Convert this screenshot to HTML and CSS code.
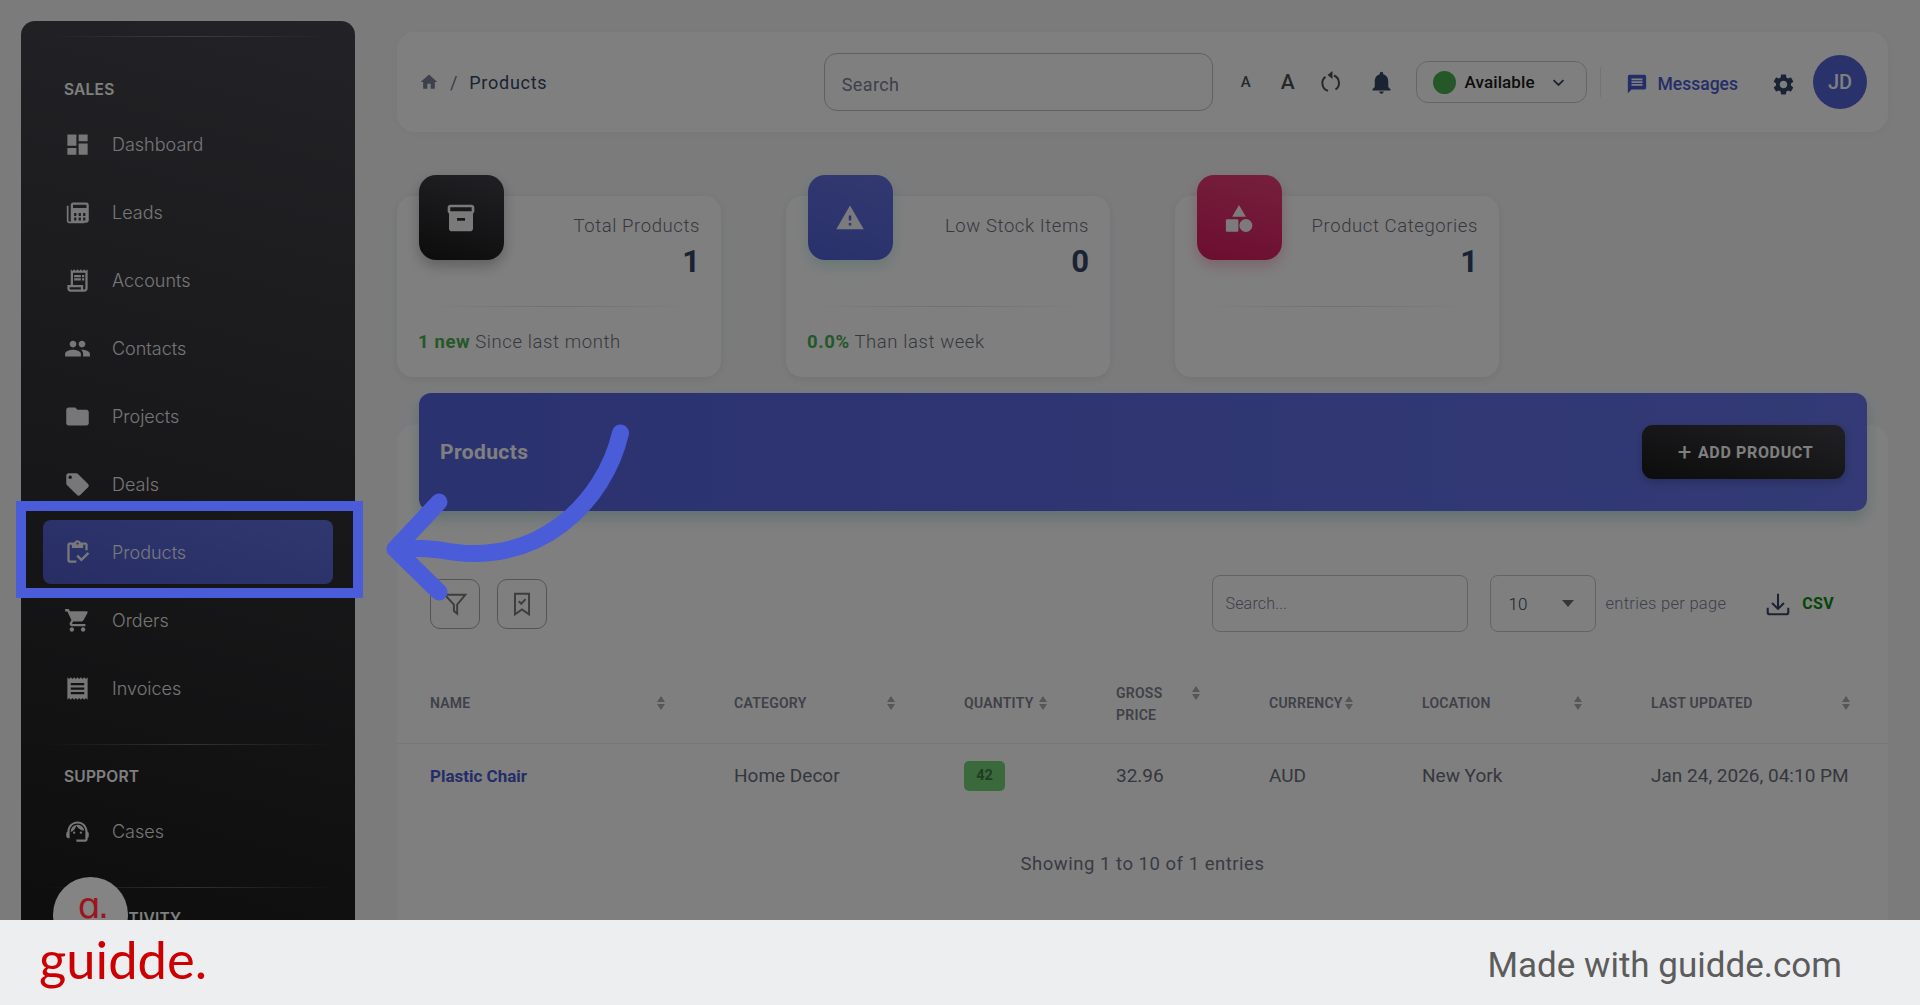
FILE: index.html
```html
<!DOCTYPE html>
<html lang="en">
<head>
<meta charset="utf-8">
<title>Products</title>
<link rel="stylesheet" href="styles.css">
</head>
<body>
<div class="stage">
  <div class="app">
    <aside class="sidebar">
      <div class="rule"></div>
      <div class="section first">SALES</div>
      <nav class="nav">
        <a class="item"><svg class="ni" viewBox="0 0 24 24"><path d="M3 13h8V3H3v10zm0 8h8v-6H3v6zm10 0h8V11h-8v10zm0-18v6h8V3h-8z"/></svg><span>Dashboard</span></a>
        <a class="item"><svg class="ni" viewBox="0 0 24 24"><path d="M4 6H2.500v13.500c0 1.100.9 2 2 2H18V20H4V6z"/><path d="M20 3H8c-1.100 0-2 .9-2 2v14c0 1.100.9 2 2 2h12c1.100 0 2-.9 2-2V5c0-1.100-.9-2-2-2zM8 5h12v3H8V5zm3 14H9v-2.500h2V19zm0-4H9v-2.500h2V15zm4 4h-2v-2.500h2V19zm0-4h-2v-2.500h2V15zm4 4h-2v-2.500h2V19zm0-4h-2v-2.500h2V15z"/></svg><span>Leads</span></a>
        <a class="item"><svg class="ni" viewBox="0 0 24 24"><path d="M19.500 3.500L18 2l-1.500 1.500L15 2l-1.500 1.500L12 2l-1.500 1.500L9 2 7.500 3.500 6 2v14H3v3c0 1.660 1.340 3 3 3h12c1.660 0 3-1.340 3-3V2l-1.500 1.500zM15 20H6c-.55 0-1-.45-1-1v-1h10v2zm4-1c0 .55-.45 1-1 1s-1-.45-1-1v-3H8V5h11v14z"/><path d="M9 7h6v2H9zm7 0h2v2h-2zM9 10h6v2H9zm7 0h2v2h-2z"/></svg><span>Accounts</span></a>
        <a class="item"><svg class="ni" viewBox="0 0 24 24"><path d="M16 11c1.660 0 2.990-1.340 2.990-3S17.660 5 16 5c-1.660 0-3 1.340-3 3s1.340 3 3 3zm-8 0c1.660 0 2.990-1.340 2.990-3S9.660 5 8 5C6.340 5 5 6.340 5 8s1.340 3 3 3zm0 2c-2.330 0-7 1.170-7 3.500V19h14v-2.500c0-2.330-4.670-3.500-7-3.500zm8 0c-.29 0-.62.02-.97.05 1.160.84 1.970 1.970 1.970 3.450V19h6v-2.500c0-2.330-4.670-3.500-7-3.500z"/></svg><span>Contacts</span></a>
        <a class="item"><svg class="ni" viewBox="0 0 24 24"><path d="M10 4H4c-1.100 0-1.990.9-1.990 2L2 18c0 1.100.9 2 2 2h16c1.100 0 2-.9 2-2V8c0-1.100-.9-2-2-2h-8l-2-2z"/></svg><span>Projects</span></a>
        <a class="item"><svg class="ni" viewBox="0 0 24 24"><path d="M21.410 11.580l-9-9C12.050 2.220 11.550 2 11 2H4c-1.100 0-2 .9-2 2v7c0 .55.22 1.050.59 1.420l9 9c.36.36.86.58 1.410.58.55 0 1.050-.22 1.410-.59l7-7c.37-.36.59-.86.59-1.410 0-.55-.23-1.060-.59-1.420zM5.500 7C4.670 7 4 6.330 4 5.500S4.670 4 5.500 4 7 4.670 7 5.500 6.330 7 5.500 7z"/></svg><span>Deals</span></a>
        <a class="item active"><svg class="ni" viewBox="0 0 24 24"><path d="M5 5h2v3h10V5h2v5h2V5c0-1.100-.9-2-2-2h-4.180C14.400 1.840 13.300 1 12 1s-2.400.84-2.820 2H5c-1.100 0-2 .9-2 2v14c0 1.100.9 2 2 2h6v-2H5V5zm7-2c.55 0 1 .45 1 1s-.45 1-1 1-1-.45-1-1 .45-1 1-1z"/><path d="M21 11.500L15.510 17l-3.010-3-1.500 1.500 4.510 4.500 6.990-7z"/></svg><span>Products</span></a>
        <a class="item"><svg class="ni" viewBox="0 0 24 24"><path d="M7 18c-1.100 0-1.990.9-1.990 2S5.900 22 7 22s2-.9 2-2-.9-2-2-2zM1 2v2h2l3.600 7.590-1.350 2.450c-.16.28-.25.61-.25.96 0 1.100.9 2 2 2h12v-2H7.420c-.14 0-.25-.11-.25-.25l.03-.12.9-1.830h7.450c.75 0 1.410-.41 1.750-1.030l3.580-6.490c.08-.14.12-.31.12-.48 0-.55-.45-1-1-1H5.210l-.94-2H1zm16 16c-1.100 0-1.990.9-1.990 2s.89 2 1.990 2 2-.9 2-2-.9-2-2-2z"/></svg><span>Orders</span></a>
        <a class="item"><svg class="ni" viewBox="0 0 24 24"><path d="M18 17H6v-2h12v2zm0-4H6v-2h12v2zm0-4H6V7h12v2zM3 22l1.500-1.500L6 22l1.500-1.500L9 22l1.500-1.500L12 22l1.500-1.500L15 22l1.500-1.500L18 22l1.500-1.500L21 22V2l-1.500 1.500L18 2l-1.500 1.500L15 2l-1.500 1.500L12 2l-1.500 1.500L9 2 7.500 3.500 6 2 4.500 3.500 3 2v20z"/></svg><span>Invoices</span></a>
      </nav>
      <div class="rule mid"></div>
      <div class="section second">SUPPORT</div>
      <nav class="nav">
        <a class="item"><svg class="ni" viewBox="0 0 24 24"><path d="M21 12.220C21 6.730 16.740 3 12 3c-4.690 0-9 3.650-9 9.280-.6.34-1 .98-1 1.720v2c0 1.100.9 2 2 2h1v-6.100c0-3.870 3.130-7 7-7s7 3.130 7 7V19h-8v2h8c1.100 0 2-.9 2-2v-1.220c.59-.31 1-.92 1-1.610v-2.300c0-.7-.41-1.310-1-1.650z"/><circle cx="9" cy="13" r="1"/><circle cx="15" cy="13" r="1"/><path d="M18 11.030C17.520 8.180 15.040 6 12.050 6c-3.030 0-6.290 2.510-6.030 6.450 2.470-1.010 4.330-3.210 4.860-5.890 1.310 2.630 4 4.440 7.120 4.470z"/></svg><span>Cases</span></a>
      </nav>
      <div class="rule low"></div>
      <div class="section third">ACTIVITY</div>
    </aside>

    <main class="main">
      <header class="topbar">
        <div class="crumbs">
          <svg class="home" viewBox="0 0 24 24"><path d="M10 20v-6h4v6h5v-8h3L12 3 2 12h3v8z"/></svg>
          <span class="slash">/</span>
          <span class="crumb">Products</span>
        </div>
        <div class="topsearch">Search</div>
        <div class="tools">
          <span class="a-small">A</span>
          <span class="a-large">A</span>
          <svg class="refresh" viewBox="0 0 24 24"><path d="M15 5.500a8 8 0 0 1 1.500 14"/><path d="M9 20.800a8 8 0 0 1 -2.500 -14"/><path class="fillp" d="M13.500 1v8l-5-4z"/></svg>
          <svg class="bell" viewBox="0 0 24 24"><path d="M12 22c1.100 0 2-.9 2-2h-4c0 1.100.89 2 2 2zm6-6v-5c0-3.070-1.640-5.640-4.500-6.320V4c0-.83-.67-1.500-1.500-1.500s-1.500.67-1.500 1.500v.68C7.630 5.360 6 7.920 6 11v5l-2 2v1h16v-1l-2-2z"/></svg>
          <div class="status"><i class="dot"></i><b>Available</b><svg class="chev" viewBox="0 0 24 24"><path d="M5 8.500l7 7 7-7"/></svg></div>
          <i class="vline"></i>
          <a class="msg"><svg viewBox="0 0 24 24"><path d="M20 2H4c-1.100 0-1.990.9-1.990 2L2 22l4-4h14c1.100 0 2-.9 2-2V4c0-1.100-.9-2-2-2zm-2 12H6v-2h12v2zm0-3H6V9h12v2zm0-3H6V6h12v2z"/></svg><span>Messages</span></a>
          <svg class="gear" viewBox="0 0 24 24"><path d="M19.140 12.940c.04-.3.06-.61.06-.94 0-.32-.02-.64-.07-.94l2.030-1.580c.18-.14.23-.41.12-.61l-1.920-3.320c-.12-.22-.37-.29-.59-.22l-2.390.96c-.5-.38-1.030-.7-1.620-.94l-.36-2.540c-.04-.24-.24-.41-.48-.41h-3.840c-.24 0-.43.17-.47.41l-.36 2.540c-.59.24-1.130.57-1.620.94l-2.390-.96c-.22-.08-.47 0-.59.22L2.740 8.870c-.12.21-.08.47.12.61l2.030 1.580c-.05.3-.09.63-.09.94s.02.64.07.94l-2.030 1.580c-.18.14-.23.41-.12.61l1.920 3.320c.12.22.37.29.59.22l2.390-.96c.5.38 1.030.7 1.620.94l.36 2.540c.05.24.24.41.48.41h3.840c.24 0 .44-.17.47-.41l.36-2.540c.59-.24 1.130-.56 1.620-.94l2.390.96c.22.08.47 0 .59-.22l1.920-3.320c.12-.22.07-.47-.12-.61l-2.010-1.580zM12 15.600c-1.980 0-3.600-1.620-3.600-3.600s1.620-3.600 3.600-3.600 3.600 1.620 3.600 3.600-1.620 3.600-3.600 3.600z"/></svg>
          <div class="avatar">JD</div>
        </div>
      </header>

      <section class="stats">
        <article class="stat">
          <div class="stat-top">
            <div class="tile t-dark"><svg class="big" viewBox="0 0 24 24"><path d="M20 2H4c-1 0-2 .9-2 2v3.010c0 .72.43 1.340 1 1.690V20c0 1.100 1.100 2 2 2h14c.9 0 2-1.100 2-2V8.700c.57-.35 1-.97 1-1.690V4c0-1.100-1-2-2-2zm-5 12H9v-2h6v2zm5-7H4V4h16v3z"/></svg></div>
            <div class="stat-text"><p>Total Products</p><h4>1</h4></div>
          </div>
          <div class="fade"></div>
          <div class="stat-foot"><b>1 new</b> Since last month</div>
        </article>
        <article class="stat">
          <div class="stat-top">
            <div class="tile t-blue"><svg viewBox="0 0 24 24"><path d="M1 21h22L12 2 1 21zm12-3h-2v-2h2v2zm0-4h-2v-4h2v4z"/></svg></div>
            <div class="stat-text"><p>Low Stock Items</p><h4>0</h4></div>
          </div>
          <div class="fade"></div>
          <div class="stat-foot"><b>0.0%</b> Than last week</div>
        </article>
        <article class="stat">
          <div class="stat-top">
            <div class="tile t-pink"><svg viewBox="0 0 24 24"><path d="M12 1.500l5.500 9.500h-11z"/><rect x="1.500" y="13" width="10" height="10" rx="1"/><circle cx="17.500" cy="18" r="5.200"/></svg></div>
            <div class="stat-text"><p>Product Categories</p><h4>1</h4></div>
          </div>
          <div class="fade"></div>
          <div class="stat-foot"></div>
        </article>
      </section>

      <section class="panel">
        <div class="panel-head">
          <h2>Products</h2>
          <button class="add"><span class="plus">+</span>ADD PRODUCT</button>
        </div>
        <div class="toolbar">
          <div class="left-tools">
            <span class="iconbtn"><svg viewBox="0 0 24 24"><path d="M2.500 3.500h19l-7.500 9v8.500l-3-2.500v-6z"/></svg></span>
            <span class="iconbtn"><svg viewBox="0 0 24 24"><path d="M5.500 2.500h13v19l-6.500-4.500-6.500 4.500z"/><path d="M9 9.500l2.300 2.300 4-4.300"/></svg></span>
          </div>
          <div class="right-tools">
            <div class="tsearch">Search...</div>
            <div class="entries"><span>10</span><i class="tri"></i></div>
            <span class="perpage">entries per page</span>
            <a class="csv"><svg viewBox="0 0 24 24"><path d="M12 2.500v14M6.500 11l5.500 5.500 5.500-5.500M2.500 15.500v4a2 2 0 0 0 2 2h15a2 2 0 0 0 2-2v-4"/></svg><b>CSV</b></a>
          </div>
        </div>
        <div class="table">
          <div class="th first"><span>NAME</span><i class="sort"></i></div>
          <div class="th"><span>CATEGORY</span><i class="sort"></i></div>
          <div class="th"><span>QUANTITY</span><i class="sort"></i></div>
          <div class="th top"><span>GROSS PRICE</span><i class="sort"></i></div>
          <div class="th"><span>CURRENCY</span><i class="sort"></i></div>
          <div class="th"><span>LOCATION</span><i class="sort"></i></div>
          <div class="th last"><span>LAST UPDATED</span><i class="sort"></i></div>
          <div class="td first"><a class="name">Plastic Chair</a></div>
          <div class="td">Home Decor</div>
          <div class="td"><span class="badge">42</span></div>
          <div class="td">32.96</div>
          <div class="td">AUD</div>
          <div class="td">New York</div>
          <div class="td">Jan 24, 2026, 04:10 PM</div>
        </div>
        <p class="showing">Showing 1 to 10 of 1 entries</p>
      </section>
    </main>
  </div>

  <div class="dim"></div>
  <div class="bubble"><span>ɑ.</span></div>
  <div class="highlight"></div>
  <svg class="arrow" viewBox="0 0 1920 920"><path d="M620.500 433C605 500 540 570 440 550C425 548 410 548 395 549M439 502L395 549L439 592"/></svg>
</div>
<footer class="brand">
  <span class="logo">guidde.</span>
  <span class="made">Made with guidde.com</span>
</footer>
</body>
</html>
```
FILE: styles.css
```css
* { box-sizing: border-box; }
html, body { margin: 0; height: 1005px; overflow: hidden; }
body { font-family: Roboto, sans-serif; color: #344767; background: #edeef0; display: flex; flex-direction: column; }
p, h2, h4 { margin: 0; }

.stage { position: relative; height: 920px; overflow: hidden; flex: none; }
.app { display: flex; align-items: flex-start; height: 920px; background: #f6f7f9; }
.dim { position: absolute; inset: 0; background: rgba(0,0,0,.5); }

/* sidebar */
.sidebar { flex: none; width: 334px; height: 963px; margin: 21px 0 0 21px; padding-top: 15px; border-radius: 14px; background: linear-gradient(195deg, #46464e, #191919); font-family: Inter, sans-serif; color: #fff; }
.rule { height: 1px; margin: 0 22px; background: linear-gradient(90deg, rgba(255,255,255,0), rgba(255,255,255,.3), rgba(255,255,255,0)); }
.rule.mid { margin-top: 24px; }
.rule.low { margin-top: 24px; }
.section { height: 20px; margin-left: 43px; font-size: 15.500px; line-height: 20px; font-weight: 600; letter-spacing: .2px; }
.section.first { margin-top: 43px; margin-bottom: 12px; }
.section.second { margin-top: 22px; margin-bottom: 12px; }
.section.third { margin-top: 21px; margin-left: 85px; }
.nav { display: flex; flex-direction: column; gap: 4px; margin: 0 22px; }
.item { display: flex; align-items: center; height: 64px; padding-left: 21px; border-radius: 8px; font-size: 18px; font-weight: 300; color: rgba(255,255,255,.92); }
.item.active { background: linear-gradient(195deg, #6170e0, #4f5cc8); }
.ni { width: 27px; height: 27px; margin-right: 21px; fill: #fff; flex: none; opacity: .92; }

/* main */
.main { flex: none; width: 1491px; margin: 32px 0 0 42px; }
.topbar { display: flex; align-items: center; height: 100px; padding: 0 21px 0 22px; border-radius: 18px; background: rgba(255,255,255,.95); box-shadow: 0 2px 12px rgba(0,0,0,.04); }
.crumbs { display: flex; align-items: center; width: 405px; font-size: 18px; letter-spacing: .75px; }
.home { width: 20px; height: 20px; fill: #7b809a; margin-right: 11px; }
.slash { color: #6c7a93; margin-right: 11px; }
.topsearch { display: flex; align-items: center; width: 389px; height: 58px; padding: 4px 0 0 17px; border: 1.500px solid #bcc0c5; border-radius: 13px; color: #7b809a; font-size: 18px; letter-spacing: .35px; }
.tools { display: flex; align-items: center; flex: 1; height: 54px; }
.a-small { margin-left: 28px; font-size: 15px; font-weight: 500; color: #495057; }
.a-large { margin-left: 30px; font-size: 21px; font-weight: 500; color: #495057; }
.refresh { width: 24px; height: 24px; margin-left: 24px; fill: none; stroke: #495057; stroke-width: 2; }
.fillp { fill: #495057; stroke: none; }
.bell { width: 27px; height: 27px; margin-left: 25px; fill: #344767; }
.status { display: flex; align-items: center; width: 171px; height: 42px; margin-left: 21px; padding-left: 16px; border: 1.500px solid #c9ccd0; border-radius: 12px; }
.dot { width: 23px; height: 23px; border-radius: 50%; background: #4caf50; }
.status b { margin-left: 9px; font-size: 17px; font-weight: 500; color: #1a1a1a; letter-spacing: .1px; }
.chev { width: 17px; height: 17px; margin-left: 15px; fill: none; stroke: #344767; stroke-width: 2.500; }
.vline { width: 1px; height: 30px; margin-left: 13px; background: #e4e6ea; }
.msg { display: flex; align-items: center; margin-left: 25px; color: #4a5bd0; font-size: 17.500px; font-weight: 500; padding-top: 4px; }
.msg svg { width: 22px; height: 22px; fill: #4a5bd0; margin-right: 10px; }
.gear { width: 25px; height: 25px; margin: 4px 0 0 33px; fill: #344767; }
.avatar { display: flex; align-items: center; justify-content: center; width: 54px; height: 54px; margin-left: 17px; border-radius: 50%; background: #5465d6; color: #fff; font-size: 20px; font-weight: 500; }

/* stats */
.stats { display: flex; gap: 65px; margin-top: 64px; }
.stat { width: 324px; height: 181px; border-radius: 16px; background: #fff; box-shadow: 0 2px 10px rgba(0,0,0,.08); padding: 0 21px; }
.stat-top { display: flex; justify-content: space-between; height: 110px; }
.tile { display: flex; align-items: center; justify-content: center; width: 85px; height: 85px; margin-top: -21px; margin-left: .5px; border-radius: 17px; }
.tile svg { width: 30px; height: 30px; fill: #fff; opacity: .95; }
.tile svg.big { width: 32px; height: 32px; }
.t-dark { background: linear-gradient(195deg, #42424a, #191919); box-shadow: 0 6px 14px rgba(0,0,0,.25); }
.t-blue { background: linear-gradient(195deg, #6573e2, #5262d8); box-shadow: 0 6px 14px rgba(70,180,180,.25); }
.t-pink { background: linear-gradient(195deg, #ec407a, #d81b60); box-shadow: 0 6px 14px rgba(216,27,96,.25); }
.stat-text { text-align: right; padding-top: 18px; }
.stat-text p { font-size: 18.500px; line-height: 24px; font-weight: 300; color: #6d7080; letter-spacing: .6px; }
.stat-text h4 { margin-top: 6px; font-size: 31px; line-height: 36px; font-weight: 700; color: #344767; }
.fade { height: 1px; background: linear-gradient(90deg, rgba(0,0,0,0), rgba(0,0,0,.12), rgba(0,0,0,0)); }
.stat-foot { margin-top: 23px; font-size: 18.500px; line-height: 24px; font-weight: 300; color: #6d7080; letter-spacing: .6px; }
.stat-foot b { color: #4caf50; font-weight: 700; }

/* panel */
.panel { margin-top: 48px; height: 600px; border-radius: 18px 18px 0 0; background: #fff; }
.panel-head { position: relative; top: -32px; display: flex; align-items: center; justify-content: space-between; height: 118px; margin: 0 21px 0 22px; padding: 0 22px 0 21px; border-radius: 12px; background: linear-gradient(90deg, #5664e0, #6675ea); box-shadow: 0 8px 14px rgba(70,160,160,.3); }
.panel-head h2 { font-size: 21px; font-weight: 700; color: #fff; letter-spacing: .4px; }
.add { display: flex; align-items: center; justify-content: center; width: 203px; height: 54px; padding: 0 0 0 4px; border: 0; border-radius: 11px; background: linear-gradient(195deg, #42424a, #191919); color: #fff; font-family: Roboto, sans-serif; font-size: 16px; font-weight: 700; letter-spacing: .65px; box-shadow: 0 3px 8px rgba(0,0,0,.2); }
.plus { font-size: 24px; font-weight: 400; margin-right: 6px; line-height: 20px; }
.toolbar { display: flex; align-items: center; justify-content: space-between; height: 57px; margin-top: 32px; padding: 0 54px 0 33px; }
.left-tools { display: flex; gap: 17px; }
.iconbtn { display: flex; align-items: center; justify-content: center; width: 50px; height: 50px; border: 1.500px solid #a9a9ad; border-radius: 10px; }
.iconbtn svg { width: 26px; height: 26px; fill: none; stroke: #7a7a7e; stroke-width: 1.800; }
.right-tools { display: flex; align-items: center; }
.tsearch { display: flex; align-items: center; width: 256px; height: 57px; padding-left: 12px; border: 1.500px solid #c4c7cb; border-radius: 8px; font-size: 16px; font-weight: 300; color: #7b809a; letter-spacing: .2px; }
.entries { display: flex; align-items: center; justify-content: space-between; width: 106px; height: 57px; margin-left: 22px; padding: 0 21px 0 17px; border: 1.500px solid #c4c7cb; border-radius: 8px; font-size: 17px; font-weight: 300; color: #344767; }
.tri { width: 0; height: 0; border: 6.500px solid transparent; border-top: 7.500px solid #6f6f73; border-bottom: 0; }
.perpage { margin-left: 9px; font-size: 16.500px; font-weight: 300; color: #7b809a; letter-spacing: .3px; }
.csv { display: flex; align-items: center; margin-left: 39px; }
.csv svg { width: 26px; height: 26px; fill: none; stroke: #344767; stroke-width: 1.900; margin-right: 11px; }
.csv b { font-size: 16px; font-weight: 700; color: #0a8a0a; letter-spacing: .3px; }
.table { display: grid; grid-template-columns: 337px 230px 152px 153px 153px 229px 237px; margin-top: 30px; }
.th { display: flex; align-items: center; justify-content: space-between; height: 82px; padding-right: 68px; font-size: 14px; line-height: 22px; font-weight: 600; letter-spacing: .25px; color: #7f8290; border-bottom: 1px solid #eef0f2; }
.th.first, .td.first { padding-left: 33px; }
.th.top { align-items: flex-start; padding-top: 20px; }
.th.top span { width: 60px; }
.th.last { padding-right: 37px; }
.sort { flex: none; width: 9px; height: 14px; margin-left: 2px; position: relative; }
.sort::before, .sort::after { content: ""; position: absolute; left: 0; border: 4.500px solid transparent; }
.sort::before { top: 0; border-bottom: 6px solid #aaacb2; border-top: 0; }
.sort::after { bottom: 0; border-top: 6px solid #aaacb2; border-bottom: 0; }
.th.top .sort { margin-top: 4px; }
.td { display: flex; align-items: center; height: 63px; font-size: 19px; font-weight: 400; color: #6b6e7d; }
.name { font-size: 17px; font-weight: 700; color: #4a5bd0; }
.badge { display: flex; align-items: center; justify-content: center; width: 41px; height: 30px; border-radius: 5px; background: #74d378; font-size: 14.500px; font-weight: 700; color: #457a49; }
.showing { margin-top: 45px; text-align: center; font-size: 18.500px; font-weight: 400; line-height: 24px; color: #737685; letter-spacing: .52px; }

/* overlays */
.bubble { position: absolute; left: 53px; top: 877px; display: flex; justify-content: center; width: 75px; height: 75px; padding-left: 3px; border-radius: 50%; background: #848484; }
.bubble span { font-family: "DejaVu Sans", sans-serif; font-size: 36px; line-height: 58px; letter-spacing: -3px; color: #9b1520; }
.highlight { position: absolute; left: 16px; top: 501px; width: 347px; height: 97px; border: 10px solid #4a5cd8; }
.arrow { position: absolute; inset: 0; width: 1920px; height: 920px; fill: none; stroke: #4a5cd8; stroke-width: 17; stroke-linecap: round; stroke-linejoin: round; }

/* footer */
.brand { display: flex; align-items: center; justify-content: space-between; height: 85px; padding: 0 78px 0 39px; background: #edeef0; }
.logo { font-family: Lato, sans-serif; font-size: 52.500px; font-weight: 400; color: #cc0000; margin-bottom: 9px; }
.made { font-size: 35px; color: #5c5c5c; margin-top: 5px; }
```
